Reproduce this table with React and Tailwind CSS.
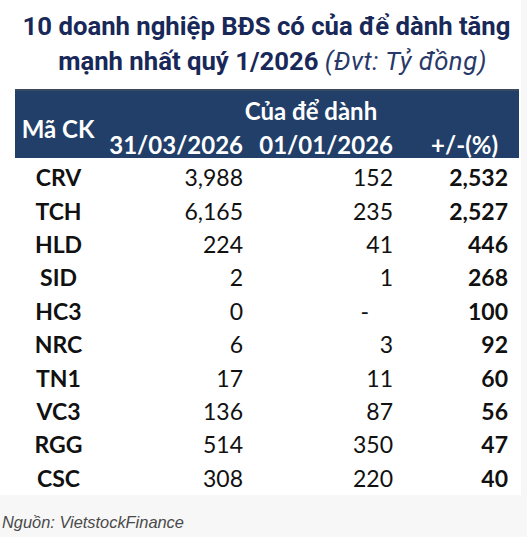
import React from "react";

const rows = [
  ["CRV", "3,988", "152", "2,532"],
  ["TCH", "6,165", "235", "2,527"],
  ["HLD", "224", "41", "446"],
  ["SID", "2", "1", "268"],
  ["HC3", "0", "-", "100"],
  ["NRC", "6", "3", "92"],
  ["TN1", "17", "11", "60"],
  ["VC3", "136", "87", "56"],
  ["RGG", "514", "350", "47"],
  ["CSC", "308", "220", "40"],
];

export default function App() {
  return (
    <div className="w-[527px] h-[537px] bg-[#f7f7f7] flex flex-col">
      <div className="w-[521px] h-[495px] bg-white flex flex-col">
        <div className="h-[89px] pt-[9px] pl-[12px] flex flex-col items-center text-[#182858] font-['Roboto',sans-serif] text-[25.7px] leading-[35px]">
          <div className="font-bold">10 doanh nghiệp BĐS có của để dành tăng</div>
          <div className="pl-[12px]">
            <span className="font-bold">mạnh nhất quý 1/2026 </span>
            <span className="italic font-normal text-[#283868] tracking-[0.5px]">(Đvt: Tỷ đồng)</span>
          </div>
        </div>
        <div className="ml-[15px] w-[504px] font-['Lato',sans-serif]">
          <div className="h-[69px] bg-[#213f69] border-t-2 border-[#3a4a5e] grid grid-cols-[86px_147px_150px_121px] grid-rows-[33px_34px] text-white font-bold text-[24px]">
            <div className="row-span-2 flex items-center justify-center pt-[9px]">Mã CK</div>
            <div className="col-span-3 flex items-end justify-center leading-none pb-[1px] pl-[2px]">Của để dành</div>
            <div className="flex items-center justify-end pr-[5px] leading-none pt-[8px]">31/03/2026</div>
            <div className="flex items-center justify-end pr-[5px] leading-none pt-[8px]">01/01/2026</div>
            <div className="flex items-center justify-end pr-[21px] leading-none pt-[8px]">+/-(%)</div>
          </div>
          {rows.map((r) => (
            <div
              key={r[0]}
              className="h-[33.4px] pt-[6px] grid grid-cols-[86px_147px_150px_121px] items-center text-[23px] text-[#111] leading-none"
            >
              <div className="font-bold text-center pl-[1px]">{r[0]}</div>
              <div className="text-right pr-[5px]">{r[1]}</div>
              <div className={r[2] === "-" ? "text-right pr-[29px]" : "text-right pr-[5px]"}>{r[2]}</div>
              <div className="text-right pr-[11px] font-bold">{r[3]}</div>
            </div>
          ))}
        </div>
      </div>
      <div className="pl-[2px] pt-[19px] text-[16.4px] italic text-[#4a4a4a] font-['Liberation_Sans',sans-serif] leading-none">
        Nguồn: VietstockFinance
      </div>
    </div>
  );
}
